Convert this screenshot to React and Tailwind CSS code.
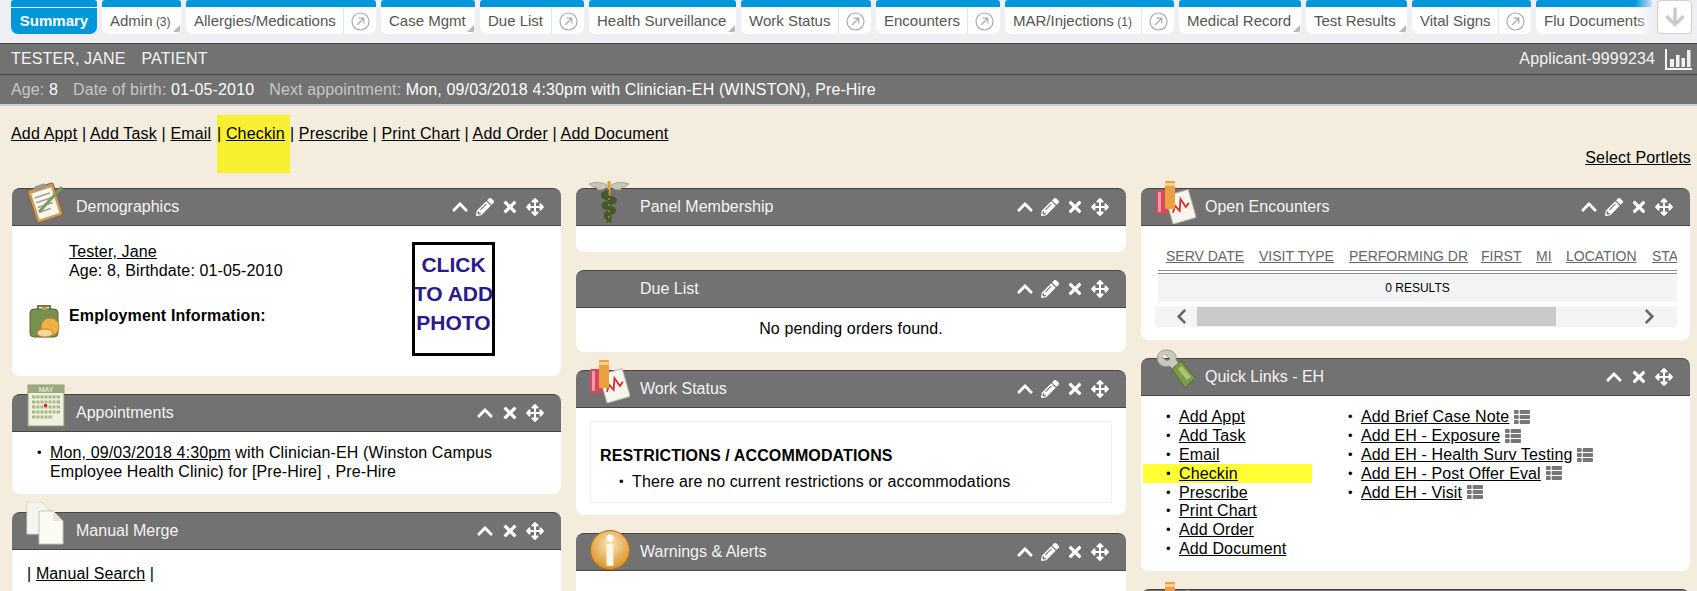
import React from 'react';
import { FaChevronUp, FaPencilAlt, FaTimes, FaArrowsAlt, FaThList, FaArrowDown, FaChevronLeft, FaChevronRight } from 'react-icons/fa';

const tabs = [
  { label: 'Admin', count: '(3)', w: 'w-[79px]', corner: true },
  { label: 'Allergies/Medications', w: 'w-[190px]', split: true },
  { label: 'Case Mgmt', w: 'w-[94px]', corner: true },
  { label: 'Due List', w: 'w-[104px]', split: true },
  { label: 'Health Surveillance', w: 'w-[147px]', corner: true },
  { label: 'Work Status', w: 'w-[130px]', split: true },
  { label: 'Encounters', w: 'w-[124px]', split: true },
  { label: 'MAR/Injections', count: '(1)', w: 'w-[169px]', split: true },
  { label: 'Medical Record', w: 'w-[122px]', corner: true },
  { label: 'Test Results', w: 'w-[101px]', corner: true },
  { label: 'Vital Signs', w: 'w-[119px]', split: true },
  { label: 'Flu Documents', w: 'w-[116px]' },
];

// small round bullet, sits further from the text than the browser's marker
const bullet = "relative before:absolute before:content-['•'] before:text-[13px] before:-left-[13px]";

const OpenIcon = () => (
  <svg width="19" height="19" viewBox="0 0 19 19" fill="none" stroke="#a9a9a9">
    <circle cx="9.5" cy="9.5" r="8.5" strokeWidth="1.2" />
    <path d="M6 13 L12.5 6.5 M7.5 6.2 H12.8 V11.5" strokeWidth="1.2" />
  </svg>
);

const Tab = ({ label, count, w, corner, split }) => (
  <div className={`${w} h-[34px] shrink-0 flex flex-col rounded-t-[3px] rounded-b-[7px] overflow-hidden`}>
    <div className="h-[7px] bg-[#0097da]" />
    <div className="relative flex-1 flex mt-px bg-white text-[#555555] text-[15px] leading-[26px]">
      <div className="flex-1 pl-2 whitespace-nowrap overflow-hidden">
        {label}
        {count && <span className="text-[12px] leading-none"> {count}</span>}
      </div>
      {split && (
        <div className="w-[33px] shrink-0 flex items-center justify-center border-l border-[#d3e8f3]">
          <OpenIcon />
        </div>
      )}
      {corner && (
        <svg className="absolute right-px bottom-[2px]" width="7" height="7" viewBox="0 0 7 7">
          <path d="M7 0 V7 H0 Z" fill="#b8b8b8" />
        </svg>
      )}
    </div>
  </div>
);

const TabBar = () => (
  <div className="relative h-[43px] bg-[#eeeef3] flex gap-[5px] pl-[11px] overflow-hidden">
    <div className="w-[86px] h-[34px] shrink-0 flex flex-col rounded-t-[3px] rounded-b-[7px] overflow-hidden bg-[#0097da]">
      <div className="h-[7px]" />
      <div className="h-px bg-white" />
      <div className="flex-1 text-center text-white font-bold text-[15px] leading-[26px]">Summary</div>
    </div>
    {tabs.map((t) => (
      <Tab key={t.label} {...t} />
    ))}
    <div className="absolute left-[1635px] top-0 w-[20px] h-[36px] bg-gradient-to-r from-transparent to-[#eeeef3]" />
    <div className="absolute left-[1657px] top-0 w-[35px] h-[34px] bg-white border border-[#cfcfcf] rounded-[4px] flex items-center justify-center text-[#c9c9c9]">
      <FaArrowDown size={22} />
    </div>
  </div>
);

const Stats = () => (
  <svg width="27" height="21" viewBox="0 0 27 21" fill="#f2f2f2">
    <path d="M0 0 H2 V19 H27 V21 H0 Z" />
    <rect x="5" y="10" width="4" height="8" />
    <rect x="11" y="6" width="3.5" height="12" />
    <rect x="16.5" y="9" width="3.5" height="9" />
    <rect x="22" y="1" width="3.5" height="17" />
  </svg>
);

const PatientHeader = () => (
  <div className="bg-[#727272] text-[16px] tracking-[0.13px] border-t border-[#444444]">
    <div className="h-[31px] flex items-center justify-between pl-[11px] pr-[5px] text-[#f4f4f4] border-b border-[#454545]">
      <div>
        TESTER, JANE<span className="ml-[16px]">PATIENT</span>
      </div>
      <div className="flex items-center gap-[10px]">
        <span>Applicant-9999234</span>
        <Stats />
      </div>
    </div>
    <div className="h-[31px] flex items-center pl-[11px] border-b-2 border-[#d0d0d0] whitespace-pre text-[#c6c6c6]">
      <div>
        Age: <span className="text-white">8</span>
        <span className="ml-[15px]">Date of birth: </span><span className="text-white">01-05-2010</span>
        <span className="ml-[15px]">Next appointment: </span><span className="text-white">Mon, 09/03/2018 4:30pm with Clinician-EH (WINSTON), Pre-Hire</span>
      </div>
    </div>
  </div>
);

const Toolbar = () => (
  <div className="relative h-[82px] pl-[11px] flex items-start whitespace-pre text-[16px] tracking-[0.17px] leading-[19px] text-black">
    <div className="pt-[18px]">
      <a className="underline">Add Appt</a> | <a className="underline">Add Task</a> | <a className="underline">Email</a>{' '}
    </div>
    <div className="mt-[9px] h-[58px] pt-[9px] bg-[#f7ef2f] pr-[5px] ml-px">
      | <a className="underline">Checkin</a>
    </div>
    <div className="pt-[18px]">
      | <a className="underline">Prescribe</a> | <a className="underline">Print Chart</a> | <a className="underline">Add Order</a> | <a className="underline">Add Document</a>
    </div>
    <a className="absolute right-[6px] top-[42px] underline">Select Portlets</a>
  </div>
);

const Clipboard = () => (
  <svg width="42" height="44" viewBox="0 0 42 44">
    <g transform="rotate(-18 20 24)">
      <rect x="7" y="6" width="27" height="34" rx="2" fill="#c99a5b" stroke="#8a6330" />
      <rect x="10" y="10" width="21" height="27" fill="#f7f6ef" />
      <rect x="15" y="4" width="11" height="5" rx="1" fill="#9a9a8a" />
      <path d="M12 15 H28 M12 20 H28 M12 25 H28 M12 30 H24" stroke="#9aa58a" strokeWidth="1.5" />
    </g>
    <path d="M14 32 L37 7" stroke="#7d9a5c" strokeWidth="3" />
  </svg>
);

const Caduceus = () => (
  <svg width="42" height="44" viewBox="0 0 42 44">
    <path d="M19 5 C12 1 6 2 1 4 L5 7 L8 7 L10 10 C14 10 17 9 19 7 Z" fill="#c9c6b8" stroke="#8d8a7c" strokeWidth=".6" />
    <path d="M23 5 C30 1 36 2 41 4 L37 7 L34 7 L32 10 C28 10 25 9 23 7 Z" fill="#c9c6b8" stroke="#8d8a7c" strokeWidth=".6" />
    <rect x="19.5" y="1" width="3" height="15" fill="#e39a3a" />
    <path d="M21 12 C13 14 14 17 21 18 C28 19 28 22 21 23 C14 24 14 27 21 28 C27 29 27 32 21 33 C17 34 17 37 21 38 L21 43" stroke="#46582a" strokeWidth="5" fill="none" />
    <path d="M21 12 V43" stroke="#b59a4a" strokeWidth="1.2" strokeDasharray="2 4" />
  </svg>
);

const ChartBook = () => (
  <svg width="42" height="44" viewBox="0 0 42 44">
    <g transform="rotate(-16 28 28)">
      <rect x="15" y="12" width="24" height="29" fill="#f6f6ee" stroke="#b9b9a8" />
      <path d="M18 30 L22 24 L25 30 L29 19 L32 28 L36 25" stroke="#dd2a2a" strokeWidth="1.8" fill="none" />
    </g>
    <rect x="2" y="10" width="12" height="24" rx="1.5" fill="#d9465e" />
    <rect x="4" y="12" width="3" height="20" fill="#f09aa8" />
    <rect x="11" y="1" width="10" height="28" rx="1" fill="#e9a23f" />
    <rect x="11" y="3" width="10" height="3" fill="#f6cf8d" />
  </svg>
);

const Calendar = () => (
  <svg width="42" height="44" viewBox="0 0 42 44">
    <rect x="3" y="1" width="36" height="41" fill="#f0f0df" stroke="#8d9a6d" />
    <rect x="3" y="1" width="36" height="8" fill="#9aa97c" />
    <text x="21" y="8" textAnchor="middle" fontFamily="Liberation Sans, sans-serif" fontSize="7" fill="#f4f4ea">MAY</text>
    <path d="M7 13 H35 M7 18 H35 M7 23 H35 M7 28 H35 M7 33 H28" stroke="#a9b78a" strokeWidth="3" />
    <path d="M11 12 V36 M15 12 V36 M19 12 V36 M23 12 V36 M27 12 V36 M31 12 V36" stroke="#f0f0df" strokeWidth="1" />
    <rect x="19" y="20" width="3" height="3" fill="#d22" />
  </svg>
);

const Docs = () => (
  <svg width="42" height="44" viewBox="0 0 42 44">
    <path d="M2 0 H17 L25 9 V32 H2 Z" fill="#f6f6f0" stroke="#d5d5ca" />
    <path d="M14 9 H28 L38 19 V42 H14 Z" fill="#fbfbf3" stroke="#c5c5b8" />
    <path d="M28 9 V19 H38 Z" fill="#e4e4d8" />
  </svg>
);

const Info = () => (
  <svg width="42" height="44" viewBox="0 0 42 44">
    <defs>
      <radialGradient id="infoOrb" cx="50%" cy="35%" r="70%">
        <stop offset="0%" stopColor="#f9e6ba" />
        <stop offset="100%" stopColor="#d98a18" />
      </radialGradient>
    </defs>
    <circle cx="20" cy="21" r="19.5" fill="url(#infoOrb)" stroke="#b96f10" />
    <circle cx="20" cy="9" r="3.5" fill="#fff" />
    <rect x="16.5" y="15" width="7" height="22" fill="#fdf6e6" />
  </svg>
);

const Wrench = () => (
  <svg width="42" height="46" viewBox="0 0 42 46">
    <path d="M14 2 C6 1 1 8 4 14 C7 19 12 19 16 18 L20 23 L27 18 L22 12 C23 7 20 3 14 2 Z M11 6 L16 11 L13 13 L8 9" fill="#c9c9bb" stroke="#8b8b7f" strokeWidth=".8" />
    <path d="M18 21 L27 13 L41 30 L31 40 Z" fill="#7d9a46" stroke="#54692c" />
    <path d="M24 21 L28 18 L37 29 L33 32 Z" fill="#a8c574" />
  </svg>
);

const Briefcase = () => (
  <svg width="32" height="34" viewBox="0 0 32 34">
    <path d="M9 5 V1 H21 V5" fill="none" stroke="#6f7f45" strokeWidth="2" />
    <rect x="1" y="4" width="28" height="28" rx="4" fill="#75914f" stroke="#55693a" />
    <rect x="13" y="2" width="5" height="3" fill="#d99a2d" />
    <circle cx="21" cy="22" r="9" fill="#f0b048" stroke="#c98420" />
    <ellipse cx="16" cy="28" rx="8" ry="4" fill="#f6d79c" stroke="#c98420" />
  </svg>
);

const Panel = ({ icon, title, edit = true, iconTop = '-top-[8px]', iconLeft = 'left-[13px]', children }) => (
  <div className="relative mb-[18px] rounded-[8px] bg-white">
    <div className="h-[38px] pl-[64px] pr-[17px] flex items-center justify-between bg-[#727272] rounded-t-[8px] border-t border-b border-[#454545] text-[#f4f4f4] text-[16px]">
      <span className="-mt-px">{title}</span>
      <div className="flex items-center gap-[7px] text-white">
        <FaChevronUp size={18} />
        {edit && <FaPencilAlt size={18} />}
        <FaTimes size={18} />
        <FaArrowsAlt size={18} />
      </div>
    </div>
    {icon && <div className={`absolute ${iconTop} ${iconLeft}`}>{icon}</div>}
    <div className="text-[16px] tracking-[0.13px] leading-[19px] text-black">{children}</div>
  </div>
);

const Demographics = () => (
  <Panel icon={<Clipboard />} title="Demographics">
    <div className="relative h-[150px] pl-[57px] pt-[16px]">
      <a className="underline">Tester, Jane</a>
      <div>Age: 8, Birthdate: 01-05-2010</div>
      <div className="mt-[26px] font-bold">Employment Information:</div>
      <div className="absolute left-[17px] top-[79px]"><Briefcase /></div>
      <div className="absolute left-[400px] top-[16px] w-[83px] h-[114px] border-[3px] border-black pt-[5px] text-center text-[#2a1a8c] font-bold text-[21px] tracking-normal leading-[29px] whitespace-nowrap">
        <div>CLICK</div>
        <div className="-mx-[3px]">TO ADD</div>
        <div>PHOTO</div>
      </div>
    </div>
  </Panel>
);

const Appointments = () => (
  <Panel icon={<Calendar />} title="Appointments" edit={false} iconTop="-top-[10px]">
    <ul className="pl-[38px] pr-[30px] pt-[11px] pb-[13px]">
      <li className={bullet}><a className="underline">Mon, 09/03/2018 4:30pm</a> with Clinician-EH (Winston Campus Employee Health Clinic) for [Pre-Hire] , Pre-Hire</li>
    </ul>
  </Panel>
);

const ManualMerge = () => (
  <Panel icon={<Docs />} title="Manual Merge" edit={false} iconTop="-top-[10px]">
    <div className="pl-[15px] pt-[14px] pb-[20px]">| <a className="underline">Manual Search</a> |</div>
  </Panel>
);

const PanelMembership = () => (
  <Panel icon={<Caduceus />} title="Panel Membership" iconLeft="left-[12px]">
    <div className="h-[26px]" />
  </Panel>
);

const DueList = () => (
  <Panel title="Due List">
    <div className="h-[44px] pt-[11px] text-center">No pending orders found.</div>
  </Panel>
);

const WorkStatus = () => (
  <Panel icon={<ChartBook />} title="Work Status" iconLeft="left-[12px]" iconTop="-top-[11px]">
    <div className="px-[14px] pt-[13px] pb-[12px]">
      <div className="h-[82px] border border-[#f0f0f0] pl-[9px] pt-[24px]">
        <div className="font-bold">RESTRICTIONS / ACCOMMODATIONS</div>
        <ul className="pl-[32px] mt-[7px]">
          <li className={bullet}>There are no current restrictions or accommodations</li>
        </ul>
      </div>
    </div>
  </Panel>
);

const Warnings = () => (
  <Panel icon={<Info />} title="Warnings & Alerts" iconLeft="left-[14px]" iconTop="-top-[4px]">
    <div className="h-[40px]" />
  </Panel>
);

const encounterCols = [
  ['SERV DATE', 'w-[93px]'],
  ['VISIT TYPE', 'w-[90px]'],
  ['PERFORMING DR', 'w-[132px]'],
  ['FIRST', 'w-[55px]'],
  ['MI', 'w-[30px]'],
  ['LOCATION', 'w-[86px]'],
  ['STATUS', 'w-[60px]'],
];

const OpenEncounters = () => (
  <Panel icon={<ChartBook />} title="Open Encounters" iconLeft="left-[13px]" iconTop="-top-[8px]">
    <div className="h-[114px] pt-[22px] pl-[17px] pr-[13px]">
      <div className="overflow-hidden">
        <div className="h-[26px] flex pl-[8px] border-b-[4px] border-double border-[#8c8c8c] text-[14px] tracking-normal leading-[17px] text-[#666666]">
          {encounterCols.map(([name, w]) => (
            <span key={name} className={`${w} shrink-0 underline whitespace-nowrap`}>{name}</span>
          ))}
        </div>
        <div className="h-[28px] bg-[#f4f4f6] text-center text-[12px] tracking-normal leading-[28px]">0 RESULTS</div>
      </div>
      <div className="h-[21px] mt-[4px] -ml-[3px] bg-[#f4f4f6] flex items-center text-[#666666] relative">
        <FaChevronLeft className="ml-[18px]" size={17} />
        <div className="absolute left-[42px] top-[1px] h-[19px] w-[359px] bg-[#c9c9c9]" />
        <FaChevronRight className="absolute right-[19px] top-[2px]" size={17} />
      </div>
    </div>
  </Panel>
);

const quickLeft = ['Add Appt', 'Add Task', 'Email', 'Checkin', 'Prescribe', 'Print Chart', 'Add Order', 'Add Document'];
const quickRight = ['Add Brief Case Note', 'Add EH - Exposure', 'Add EH - Health Surv Testing', 'Add EH - Post Offer Eval', 'Add EH - Visit'];

const QuickLinks = () => (
  <Panel icon={<Wrench />} title="Quick Links - EH" edit={false} iconLeft="left-[13px]" iconTop="-top-[10px]">
    <div className="h-[175px] flex pt-[11px] pl-[2px]">
      <ul className="w-[169px] shrink-0">
        {quickLeft.map((l) => (
          <li key={l} className={`h-[18.9px] pl-[36px] ${l === 'Checkin' ? 'bg-[#ffff33]' : ''}`}>
            <a className={`${bullet} underline`}>{l}</a>
          </li>
        ))}
      </ul>
      <ul className="pl-[49px]">
        {quickRight.map((l) => (
          <li key={l} className={`${bullet} h-[18.9px] whitespace-nowrap`}>
            <a className="underline">{l}</a>
            <FaThList className="inline ml-[5px] mb-[2px] text-[#777777]" size={16} />
          </li>
        ))}
      </ul>
    </div>
  </Panel>
);

const App = () => (
  <div className="h-[591px] overflow-hidden bg-[#f4ecdd] font-['Liberation_Sans',Arial,sans-serif]">
    <TabBar />
    <PatientHeader />
    <Toolbar />
    <div className="flex gap-[15px] pl-[12px]">
      <div className="w-[549px] shrink-0">
        <Demographics />
        <Appointments />
        <ManualMerge />
      </div>
      <div className="w-[550px] shrink-0">
        <PanelMembership />
        <DueList />
        <WorkStatus />
        <Warnings />
      </div>
      <div className="w-[549px] shrink-0">
        <OpenEncounters />
        <QuickLinks />
        <Panel icon={<ChartBook />} title="" />
      </div>
    </div>
  </div>
);

export default App;
